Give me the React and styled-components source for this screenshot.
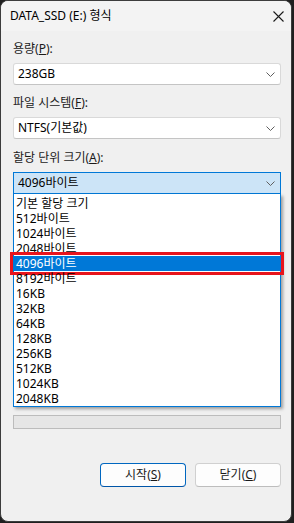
import React from "react";
import styled, { createGlobalStyle } from "styled-components";

const Global = createGlobalStyle`
  html, body { margin: 0; padding: 0; }
  body {
    background: #1f1f1f;
    width: 294px;
    height: 523px;
    overflow: hidden;
    font-family: "Noto Sans", "Noto Sans CJK KR", sans-serif;
    font-size: 12px;
    color: #000;
  }
`;

const Window = styled.div`
  width: 292px;
  height: 522px;
  box-sizing: border-box;
  border: 1px solid #3c3c3c;
  border-radius: 8px;
  background: #f0f0f0;
  overflow: hidden;
  display: flex;
  flex-direction: column;
`;

const TitleBar = styled.div`
  height: 30px;
  flex: none;
  display: flex;
  align-items: center;
  padding: 0 7px 0 9px;
  background: #f3f3f3;
`;

const Title = styled.div`
  font-size: 12px;
  line-height: 16px;
  color: #000;
`;

const CloseBtn = styled.div`
  margin-left: auto;
  width: 12px;
  height: 12px;
  display: flex;
  align-items: center;
  justify-content: center;
`;

const Body = styled.div`
  flex: 1;
  display: flex;
  flex-direction: column;
  padding: 10px 10px 0 12px;
`;

const Label = styled.div`
  height: 16px;
  line-height: 16px;
  margin-top: ${(p) => p.$mt || 0}px;
  color: #1a1a1a;
  white-space: nowrap;
`;

const ComboWrap = styled.div`
  position: relative;
  margin-top: 6px;
`;

const Combo = styled.div`
  height: 22px;
  box-sizing: border-box;
  display: flex;
  align-items: center;
  padding: 0 5px 0 4px;
  border: 1px solid ${(p) => (p.$active ? "#0078d7" : "#d9d9d9")};
  border-bottom-color: ${(p) => (p.$active ? "#0078d7" : "#c4c4c4")};
  border-radius: ${(p) => (p.$active ? "0" : "3px")};
  background: ${(p) => (p.$active ? "#cce4f7" : "#ffffff")};
  line-height: 16px;
`;

const ComboText = styled.span`
  flex: 1;
  white-space: nowrap;
`;

const DropList = styled.div`
  position: absolute;
  top: 100%;
  left: 0;
  right: 0;
  background: #fff;
  border: 1px solid #0078d7;
  border-top: none;
  padding-top: 2px;
  box-shadow: 2px 2px 3px rgba(0, 0, 0, 0.35);
  z-index: 5;
`;

const Item = styled.div`
  height: 15px;
  line-height: 15px;
  padding-left: 2px;
  white-space: nowrap;
  background: ${(p) => (p.$sel ? "#0078d7" : "transparent")};
  color: ${(p) => (p.$sel ? "#fff" : "#000")};
  outline: ${(p) => (p.$sel ? "3px solid #e8141c" : "none")};
  outline-offset: 1px;
  position: relative;
`;

const Progress = styled.div`
  margin-top: 221px;
  height: 14px;
  box-sizing: border-box;
  border: 1px solid #bcbcbc;
  background: #e6e6e6;
`;

const ButtonRow = styled.div`
  margin-top: 34px;
  display: flex;
  justify-content: flex-end;
  gap: 9px;
`;

const Button = styled.div`
  width: 86px;
  height: 24px;
  box-sizing: border-box;
  display: flex;
  align-items: center;
  justify-content: center;
  border-radius: 4px;
  background: #fdfdfd;
  border: 1px solid ${(p) => (p.$primary ? "#0067c0" : "#d0d0d0")};
  border-bottom-color: ${(p) => (p.$primary ? "#0055a8" : "#bdbdbd")};
  line-height: 16px;
  color: #1a1a1a;
`;

const Chevron = () => (
  <svg width="9" height="5" viewBox="0 0 9 5">
    <polyline points="0.5,0.5 4.5,4.5 8.5,0.5" fill="none" stroke="#5f5f5f" strokeWidth="1" />
  </svg>
);

const sizes = [
  "기본 할당 크기",
  "512바이트",
  "1024바이트",
  "2048바이트",
  "4096바이트",
  "8192바이트",
  "16KB",
  "32KB",
  "64KB",
  "128KB",
  "256KB",
  "512KB",
  "1024KB",
  "2048KB",
];

export default function App() {
  return (
    <>
      <Global />
      <Window>
        <TitleBar>
          <Title>DATA_SSD (E:) 형식</Title>
          <CloseBtn>
            <svg width="11" height="11" viewBox="0 0 11 11">
              <path d="M0.5 0.5 L10.5 10.5 M10.5 0.5 L0.5 10.5" stroke="#1a1a1a" strokeWidth="1.1" />
            </svg>
          </CloseBtn>
        </TitleBar>
        <Body>
          <Label>
            용량(<u>P</u>):
          </Label>
          <ComboWrap>
            <Combo>
              <ComboText>238GB</ComboText>
              <Chevron />
            </Combo>
          </ComboWrap>
          <Label $mt={10}>
            파일 시스템(<u>F</u>):
          </Label>
          <ComboWrap>
            <Combo>
              <ComboText>NTFS(기본값)</ComboText>
              <Chevron />
            </Combo>
          </ComboWrap>
          <Label $mt={11}>
            할당 단위 크기(<u>A</u>):
          </Label>
          <ComboWrap>
            <Combo $active>
              <ComboText>4096바이트</ComboText>
              <Chevron />
            </Combo>
            <DropList>
              {sizes.map((s) => (
                <Item key={s} $sel={s === "4096바이트"}>
                  {s}
                </Item>
              ))}
            </DropList>
          </ComboWrap>
          <Progress />
          <ButtonRow>
            <Button $primary>
              시작(<u>S</u>)
            </Button>
            <Button>
              닫기(<u>C</u>)
            </Button>
          </ButtonRow>
        </Body>
      </Window>
    </>
  );
}
